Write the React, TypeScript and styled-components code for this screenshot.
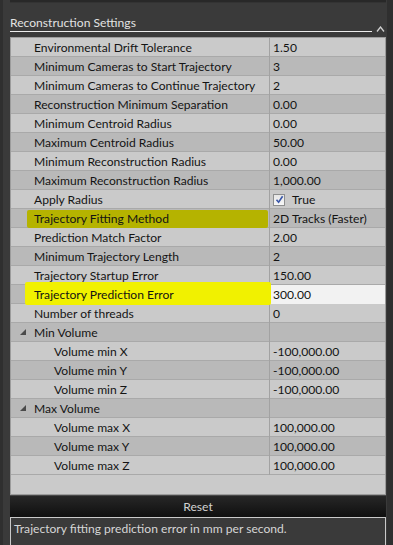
import React from "react"
import styled, { createGlobalStyle } from "styled-components"

type RowKind = "prop" | "category" | "check"

interface PropRow {
	label: string
	value?: string
	level?: number
	kind?: RowKind
	mark?: "olive" | "yellow"
	editing?: boolean
}

const rows: PropRow[] = [
	{ label: "Environmental Drift Tolerance", value: "1.50" },
	{ label: "Minimum Cameras to Start Trajectory", value: "3" },
	{ label: "Minimum Cameras to Continue Trajectory", value: "2" },
	{ label: "Reconstruction Minimum Separation", value: "0.00" },
	{ label: "Minimum Centroid Radius", value: "0.00" },
	{ label: "Maximum Centroid Radius", value: "50.00" },
	{ label: "Minimum Reconstruction Radius", value: "0.00" },
	{ label: "Maximum Reconstruction Radius", value: "1,000.00" },
	{ label: "Apply Radius", value: "True", kind: "check" },
	{ label: "Trajectory Fitting Method", value: "2D Tracks (Faster)", mark: "olive" },
	{ label: "Prediction Match Factor", value: "2.00" },
	{ label: "Minimum Trajectory Length", value: "2" },
	{ label: "Trajectory Startup Error", value: "150.00" },
	{ label: "Trajectory Prediction Error", value: "300.00", mark: "yellow", editing: true },
	{ label: "Number of threads", value: "0" },
	{ label: "Min Volume", kind: "category" },
	{ label: "Volume min X", value: "-100,000.00", level: 1 },
	{ label: "Volume min Y", value: "-100,000.00", level: 1 },
	{ label: "Volume min Z", value: "-100,000.00", level: 1 },
	{ label: "Max Volume", kind: "category" },
	{ label: "Volume max X", value: "100,000.00", level: 1 },
	{ label: "Volume max Y", value: "100,000.00", level: 1 },
	{ label: "Volume max Z", value: "100,000.00", level: 1 },
]

const GlobalStyle = createGlobalStyle`
	html, body {
		margin: 0;
		padding: 0;
		background: #3a3a3a;
	}
	body {
		font-family: "Segoe UI", Lato, "Noto Sans", sans-serif;
		font-size: 12.1px;
	}
`

const Frame = styled.div`
	width: 393px;
	height: 545px;
	display: flex;
	flex-direction: row;
	overflow: hidden;
	background: #3a3a3a;
`

const Edge = styled.div<{ $w: number }>`
	width: ${({ $w }) => $w}px;
	flex-shrink: 0;
	background: #2f2f2f;
`

const Panel = styled.div`
	flex: 1;
	display: flex;
	flex-direction: column;
	padding-left: 7px;
	padding-right: 1px;
	min-width: 0;
`

const TopStub = styled.div`
	height: 3px;
	flex-shrink: 0;
	background: #282828;
	border-bottom: 1px solid #333;
	box-sizing: border-box;
`

const Header = styled.div`
	height: 34px;
	flex-shrink: 0;
	display: flex;
	align-items: flex-end;
	gap: 4px;
	padding-bottom: 5px;
	box-sizing: border-box;
`

const Title = styled.div`
	flex: 1;
	color: #e2e2e2;
	line-height: 15px;
	padding-bottom: 1px;
	border-bottom: 1px solid #ececec;
`

const Chevron = styled.svg`
	width: 9px;
	height: 6px;
	margin-bottom: 0;
	margin-right: 1px;
`

const Grid = styled.div`
	flex: 1;
	display: flex;
	flex-direction: column;
	background: #cacaca;
	border: 1px solid #9c9c9c;
	min-height: 0;
`

const Row = styled.div<{ $alt: boolean }>`
	display: grid;
	grid-template-columns: 259px 1fr;
	height: 19px;
	flex-shrink: 0;
	box-sizing: border-box;
	border-bottom: 1px solid #a9a9a9;
	background: ${({ $alt }) => ($alt ? "#b9b9b9" : "#cacaca")};
	color: #141414;
	line-height: 19px;
`

const markColors = {
	olive: { bg: "#b5b300", l: 16, r: 1, t: 1, b: 0 },
	yellow: { bg: "#f1f100", l: 14, r: -2, t: -3, b: -1 },
}

const LabelCell = styled.div<{ $level: number; $mark?: "olive" | "yellow" }>`
	position: relative;
	padding-left: ${({ $level }) => 23 + $level * 20}px;
	border-right: 1px solid #a2a2a2;
	white-space: nowrap;
	overflow: visible;

	&::before {
		content: "";
		display: ${({ $mark }) => ($mark ? "block" : "none")};
		position: absolute;
		left: ${({ $mark }) => ($mark ? markColors[$mark].l : 0)}px;
		right: ${({ $mark }) => ($mark ? markColors[$mark].r : 0)}px;
		top: ${({ $mark }) => ($mark ? markColors[$mark].t : 0)}px;
		bottom: ${({ $mark }) => ($mark ? markColors[$mark].b : 0)}px;
		background: ${({ $mark }) => ($mark ? markColors[$mark].bg : "transparent")};
		border-radius: 2px;
		z-index: 1;
	}
`

const LabelText = styled.span`
	position: relative;
	z-index: 2;
`

const Expander = styled.svg`
	position: absolute;
	left: 9px;
	top: 6px;
	width: 6px;
	height: 6px;
`

const ValueCell = styled.div<{ $editing?: boolean }>`
	padding-left: 3px;
	white-space: nowrap;
	overflow: hidden;
	background: ${({ $editing }) => ($editing ? "#f2f2f2" : "transparent")};
	display: flex;
	align-items: center;
	gap: 7px;
`

const CheckBox = styled.div`
	width: 12px;
	height: 12px;
	box-sizing: border-box;
	border: 1px solid #8e8f8f;
	background: linear-gradient(#e6e6e6, #f7f7f7);
	display: flex;
	align-items: center;
	justify-content: center;
`

const Filler = styled.div`
	flex: 1;
	background: #cacaca;
`

const ResetBar = styled.div`
	height: 22px;
	flex-shrink: 0;
	box-sizing: border-box;
	border-top: 1px solid #484848;
	background: linear-gradient(#272727, #0f0f0f);
	color: #d2d2d2;
	text-align: center;
	line-height: 21px;
`

const Description = styled.div`
	height: 28px;
	flex-shrink: 0;
	box-sizing: border-box;
	border: 1px solid #c9c9c9;
	border-bottom: none;
	background: #3a3a3a;
	color: #d6d6d6;
	padding: 3px 0 0 3px;
	line-height: 16px;
`

function PropertyRow({ row, index }: { row: PropRow; index: number }) {
	const level = row.level ?? 0
	return (
		<Row $alt={index % 2 === 1}>
			<LabelCell $level={level} $mark={row.mark}>
				{row.kind === "category" && (
					<Expander viewBox="0 0 6 6">
						<polygon points="6,0 6,6 0,6" fill="#4a4a4a" />
					</Expander>
				)}
				<LabelText>{row.label}</LabelText>
			</LabelCell>
			<ValueCell $editing={row.editing}>
				{row.kind === "check" && (
					<CheckBox>
						<svg width="9" height="9" viewBox="0 0 9 9">
							<path d="M1.5 4.8 L3.6 7.2 L7.6 1.2" stroke="#3a57a8" strokeWidth="1.6" fill="none" />
						</svg>
					</CheckBox>
				)}
				{row.value}
			</ValueCell>
		</Row>
	)
}

export default function App() {
	return (
		<Frame>
			<GlobalStyle />
			<Edge $w={3} />
			<Panel>
				<TopStub />
				<Header>
					<Title>Reconstruction Settings</Title>
					<Chevron viewBox="0 0 9 6">
						<polyline points="1,5.5 4.5,1 8,5.5" stroke="#d0d0d0" strokeWidth="1.3" fill="none" />
					</Chevron>
				</Header>
				<Grid>
					{rows.map((row, i) => (
						<PropertyRow key={row.label} row={row} index={i} />
					))}
					<Filler />
				</Grid>
				<ResetBar>Reset</ResetBar>
				<Description>Trajectory fitting prediction error in mm per second.</Description>
			</Panel>
			<Edge $w={6} />
		</Frame>
	)
}
